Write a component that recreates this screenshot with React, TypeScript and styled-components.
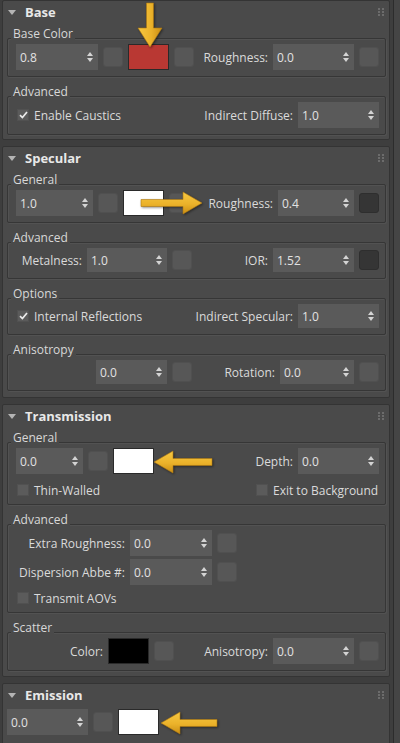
import React, { useId } from 'react';
import styled, { createGlobalStyle } from 'styled-components';

const GlobalStyle = createGlobalStyle`
  html, body {
    margin: 0;
    padding: 0;
    background: #3e3e3e;
  }
  body {
    font-family: "Open Sans", "Noto Sans", "Liberation Sans", sans-serif;
    font-size: 12px;
    color: #dadada;
  }
`;

const Page = styled.div`
  display: flex;
  width: 400px;
  height: 743px;
  overflow: hidden;
  background: #3e3e3e;
`;

const Panel = styled.div`
  display: flex;
  flex-direction: column;
  gap: 6px;
  width: 390px;
  padding-left: 2px;
  box-sizing: border-box;
  flex: none;
`;

const ScrollEdge = styled.div`
  width: 7px;
  margin-left: 3px;
  border-left: 1px solid #2c2c2c;
  background: #454545;
`;

const Rollout = styled.section<{ $pb?: number }>`
  background: #4a4a4a;
  border: 1px solid #343434;
  border-radius: 2px;
  padding: 0 3px ${p => p.$pb ?? 4}px 4px;
  flex: none;
`;

const RolloutHeader = styled.div`
  display: flex;
  align-items: center;
  height: 22px;
  padding: 0 1px 0 1px;
`;

const RolloutTitle = styled.span`
  margin-left: 9px;
  font-weight: 700;
  font-size: 13px;
  color: #e8e8e8;
`;

const GripIcon = styled.svg`
  margin-left: auto;
  margin-right: 1px;
`;

const RolloutBody = styled.div<{ $pt?: number }>`
  display: flex;
  flex-direction: column;
  gap: 8px;
  padding-top: ${p => p.$pt ?? 4}px;
`;

const Group = styled.div`
  display: flex;
  flex-direction: column;
`;

const GroupTitle = styled.span`
  position: relative;
  z-index: 1;
  align-self: flex-start;
  margin: 0 0 -3px 4px;
  padding: 0 2px;
  line-height: 14px;
  background: #4a4a4a;
  color: #d8d8d8;
`;

const GroupBox = styled.div<{ $gap?: number }>`
  display: flex;
  flex-direction: column;
  gap: ${p => p.$gap ?? 4}px;
  padding: 5px 6px 6px 8px;
  border: 1px solid #363636;
  border-radius: 2px;
  box-shadow: 1px 1px 0 #525252, inset 1px 1px 0 #525252;
`;

const Row = styled.div<{ $mt?: number }>`
  display: flex;
  align-items: center;
  gap: 5px;
  margin-top: ${p => p.$mt ?? 0}px;
`;

const Cluster = styled.div<{ $w?: number }>`
  display: flex;
  align-items: center;
  gap: 5px;
  margin-left: auto;
  ${p => (p.$w ? `width: ${p.$w}px;` : '')}
`;

const FieldLabel = styled.span<{ $w?: number }>`
  flex: none;
  white-space: nowrap;
  color: #dadada;
  ${p => (p.$w ? `width: ${p.$w}px; text-align: right;` : '')}
`;

const SpinnerBox = styled.div<{ $w: number; $h: number }>`
  display: flex;
  align-items: center;
  justify-content: space-between;
  flex: none;
  width: ${p => p.$w}px;
  height: ${p => p.$h}px;
  box-sizing: border-box;
  padding: 0 5px 0 4px;
  background: #5a5a5a;
  color: #e2e2e2;
`;

const MapButton = styled.span<{ $dark?: boolean }>`
  flex: none;
  width: 20px;
  height: 20px;
  box-sizing: border-box;
  border-radius: 3px;
  background: ${p => (p.$dark ? '#353535' : '#575757')};
  border: 1px solid ${p => (p.$dark ? '#2e2e2e' : '#505050')};
`;

const Swatch = styled.span<{ $color: string }>`
  position: relative;
  flex: none;
  width: 41px;
  height: 26px;
  box-sizing: border-box;
  background: ${p => p.$color};
  border: 1px solid #2a2a2a;
`;

const CheckRow = styled.label`
  display: flex;
  align-items: center;
  gap: 5px;
  height: 16px;
  margin-left: 1px;
  color: #dadada;
`;

const CheckBox = styled.span`
  display: flex;
  align-items: center;
  justify-content: center;
  width: 12px;
  height: 12px;
  box-sizing: border-box;
  background: #5b5b5b;
  border: 1px solid #515151;
`;

const ArrowSvg = styled.svg<{ $top: number; $left: number }>`
  position: absolute;
  top: ${p => p.$top}px;
  left: ${p => p.$left}px;
  z-index: 3;
  overflow: visible;
  pointer-events: none;
  filter: drop-shadow(1px 1px 1px rgba(0, 0, 0, 0.45));
`;

const Caret = () => (
  <svg width="8" height="5" viewBox="0 0 8 5">
    <path d="M0 0 L8 0 L4 5 Z" fill="#b4b4b4" />
  </svg>
);

const Grip = () => (
  <GripIcon width="6" height="9" viewBox="0 0 6 9">
    {[0, 3, 6].map(y => (
      <g key={y}>
        <rect x="0" y={y} width="2" height="2" fill="#6c6c6c" />
        <rect x="4" y={y} width="2" height="2" fill="#6c6c6c" />
      </g>
    ))}
  </GripIcon>
);

const Spinner = ({ value, w, h = 26 }: { value: string; w: number; h?: number }) => (
  <SpinnerBox $w={w} $h={h}>
    <span>{value}</span>
    <svg width="6" height="10" viewBox="0 0 6 10">
      <path d="M0 4 L3 0 L6 4 Z M0 6 L3 10 L6 6 Z" fill="#d4d4d4" />
    </svg>
  </SpinnerBox>
);

const Check = ({ label, on }: { label: string; on?: boolean }) => (
  <CheckRow>
    <CheckBox>
      {on && (
        <svg width="9" height="8" viewBox="0 0 9 8">
          <path d="M1 4.2 L3.4 6.6 L8 1" stroke="#ececec" strokeWidth="1.7" fill="none" />
        </svg>
      )}
    </CheckBox>
    {label}
  </CheckRow>
);

type Dir = 'down' | 'right' | 'left';

const Arrow = ({ dir, len, top, left }: { dir: Dir; len: number; top: number; left: number }) => {
  const id = useId();
  const head = 19;
  const t = 7;
  const span = 22;
  let w: number;
  let h: number;
  let pts: number[][];
  if (dir === 'down') {
    w = 24;
    h = len;
    const c = w / 2;
    pts = [
      [c - t / 2, 0], [c + t / 2, 0], [c + t / 2, h - head], [w, h - head],
      [c, h], [0, h - head], [c - t / 2, h - head],
    ];
  } else {
    w = len;
    h = span;
    const c = h / 2;
    pts = [
      [0, c - t / 2], [w - head, c - t / 2], [w - head, 0], [w, c],
      [w - head, h], [w - head, c + t / 2], [0, c + t / 2],
    ];
    if (dir === 'left') pts = pts.map(([x, y]) => [w - x, y]);
  }
  const gx2 = dir === 'down' ? '1' : '0';
  const gy2 = dir === 'down' ? '0' : '1';
  return (
    <ArrowSvg $top={top} $left={left} width={w} height={h} viewBox={`0 0 ${w} ${h}`}>
      <defs>
        <linearGradient id={id} x1="0" y1="0" x2={gx2} y2={gy2}>
          <stop offset="0" stopColor="#f6c842" />
          <stop offset="0.55" stopColor="#ebb22a" />
          <stop offset="1" stopColor="#c98d14" />
        </linearGradient>
      </defs>
      <polygon
        points={pts.map(p => p.join(',')).join(' ')}
        fill={`url(#${id})`}
        stroke="#b07a12"
        strokeWidth="0.6"
        strokeLinejoin="round"
      />
    </ArrowSvg>
  );
};

const Header = ({ title }: { title: string }) => (
  <RolloutHeader>
    <Caret />
    <RolloutTitle>{title}</RolloutTitle>
    <Grip />
  </RolloutHeader>
);

export default function App() {
  return (
    <Page>
      <GlobalStyle />
      <Panel>
        <Rollout>
          <Header title="Base" />
          <RolloutBody>
            <Group>
              <GroupTitle>Base Color</GroupTitle>
              <GroupBox>
                <Row>
                  <Spinner value="0.8" w={82} />
                  <MapButton />
                  <Swatch $color="#b93833">
                    <Arrow dir="down" len={44} top={-42} left={9} />
                  </Swatch>
                  <MapButton />
                  <Cluster>
                    <FieldLabel>Roughness:</FieldLabel>
                    <Spinner value="0.0" w={81} />
                    <MapButton />
                  </Cluster>
                </Row>
              </GroupBox>
            </Group>
            <Group>
              <GroupTitle>Advanced</GroupTitle>
              <GroupBox>
                <Row>
                  <Check label="Enable Caustics" on />
                  <Cluster>
                    <FieldLabel>Indirect Diffuse:</FieldLabel>
                    <Spinner value="1.0" w={81} />
                  </Cluster>
                </Row>
              </GroupBox>
            </Group>
          </RolloutBody>
        </Rollout>

        <Rollout $pb={6}>
          <Header title="Specular" />
          <RolloutBody>
            <Group>
              <GroupTitle>General</GroupTitle>
              <GroupBox>
                <Row>
                  <Spinner value="1.0" w={77} />
                  <MapButton />
                  <Swatch $color="#ffffff">
                    <Arrow dir="right" len={61} top={1} left={17} />
                  </Swatch>
                  <MapButton />
                  <Cluster>
                    <FieldLabel>Roughness:</FieldLabel>
                    <Spinner value="0.4" w={76} />
                    <MapButton $dark />
                  </Cluster>
                </Row>
              </GroupBox>
            </Group>
            <Group>
              <GroupTitle>Advanced</GroupTitle>
              <GroupBox>
                <Row>
                  <FieldLabel $w={66}>Metalness:</FieldLabel>
                  <Spinner value="1.0" w={80} h={24} />
                  <MapButton />
                  <Cluster>
                    <FieldLabel>IOR:</FieldLabel>
                    <Spinner value="1.52" w={81} h={24} />
                    <MapButton $dark />
                  </Cluster>
                </Row>
              </GroupBox>
            </Group>
            <Group>
              <GroupTitle>Options</GroupTitle>
              <GroupBox>
                <Row>
                  <Check label="Internal Reflections" on />
                  <Cluster>
                    <FieldLabel>Indirect Specular:</FieldLabel>
                    <Spinner value="1.0" w={81} h={24} />
                  </Cluster>
                </Row>
              </GroupBox>
            </Group>
            <Group>
              <GroupTitle>Anisotropy</GroupTitle>
              <GroupBox>
                <Row>
                  <FieldLabel $w={75} />
                  <Spinner value="0.0" w={71} h={24} />
                  <MapButton />
                  <Cluster>
                    <FieldLabel>Rotation:</FieldLabel>
                    <Spinner value="0.0" w={74} h={24} />
                    <MapButton />
                  </Cluster>
                </Row>
              </GroupBox>
            </Group>
          </RolloutBody>
        </Rollout>

        <Rollout $pb={5}>
          <Header title="Transmission" />
          <RolloutBody>
            <Group>
              <GroupTitle>General</GroupTitle>
              <GroupBox $gap={8}>
                <Row>
                  <Spinner value="0.0" w={67} />
                  <MapButton />
                  <Swatch $color="#ffffff">
                    <Arrow dir="left" len={58} top={2} left={40} />
                  </Swatch>
                  <Cluster>
                    <FieldLabel>Depth:</FieldLabel>
                    <Spinner value="0.0" w={81} />
                  </Cluster>
                </Row>
                <Row>
                  <Check label="Thin-Walled" />
                  <Cluster $w={124}>
                    <Check label="Exit to Background" />
                  </Cluster>
                </Row>
              </GroupBox>
            </Group>
            <Group>
              <GroupTitle>Advanced</GroupTitle>
              <GroupBox $gap={3}>
                <Row>
                  <FieldLabel $w={109}>Extra Roughness:</FieldLabel>
                  <Spinner value="0.0" w={82} />
                  <MapButton />
                </Row>
                <Row>
                  <FieldLabel $w={109}>Dispersion Abbe #:</FieldLabel>
                  <Spinner value="0.0" w={82} />
                  <MapButton />
                </Row>
                <Row $mt={2}>
                  <Check label="Transmit AOVs" />
                </Row>
              </GroupBox>
            </Group>
            <Group>
              <GroupTitle>Scatter</GroupTitle>
              <GroupBox>
                <Row>
                  <FieldLabel $w={87}>Color:</FieldLabel>
                  <Swatch $color="#000000" />
                  <MapButton />
                  <Cluster>
                    <FieldLabel>Anisotropy:</FieldLabel>
                    <Spinner value="0.0" w={81} />
                    <MapButton />
                  </Cluster>
                </Row>
              </GroupBox>
            </Group>
          </RolloutBody>
        </Rollout>

        <Rollout $pb={12}>
          <Header title="Emission" />
          <RolloutBody $pt={3}>
            <Row>
              <Spinner value="0.0" w={81} />
              <MapButton />
              <Swatch $color="#ffffff">
                <Arrow dir="left" len={56} top={2} left={42} />
              </Swatch>
            </Row>
          </RolloutBody>
        </Rollout>
      </Panel>
      <ScrollEdge />
    </Page>
  );
}
